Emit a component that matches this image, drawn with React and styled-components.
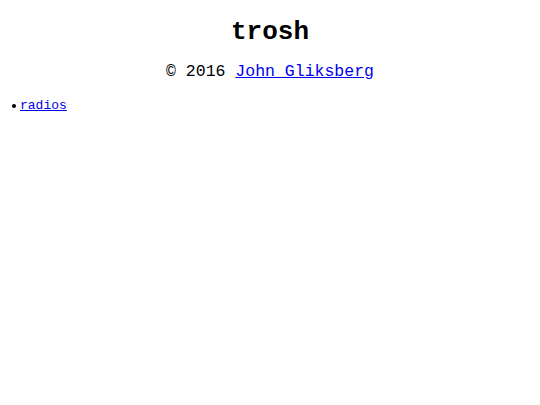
import React from "react";
import styled, { createGlobalStyle } from "styled-components";

const Global = createGlobalStyle`
  body {
    margin: 0 8px 8px;
    font-family: "Liberation Mono", monospace;
    font-size: 13px;
    background: #fff;
    color: #000;
  }
`;

const Title = styled.h1`
  font-size: 26px;
  font-weight: bold;
  text-align: center;
  margin: 17.4px 0 15px;
`;

const Credit = styled.p`
  font-size: 16.5px;
  text-align: center;
  margin: 0 0 17px;
`;

const Link = styled.a`
  color: #0000ee;
  text-decoration: underline;
`;

const List = styled.ul`
  margin: 0;
  padding: 0;
  list-style: none;
`;

const Item = styled.li`
  display: flex;
  align-items: center;
  gap: 4px;
  padding-left: 4px;

  &::before {
    content: "";
    width: 4px;
    height: 4px;
    border-radius: 50%;
    background: #000;
    margin-top: 1px;
  }
`;

export default function App() {
  return (
    <>
      <Global />
      <Title>trosh</Title>
      <Credit>
        © 2016 <Link href="#">John Gliksberg</Link>
      </Credit>
      <List>
        <Item>
          <Link href="#">radios</Link>
        </Item>
      </List>
    </>
  );
}
